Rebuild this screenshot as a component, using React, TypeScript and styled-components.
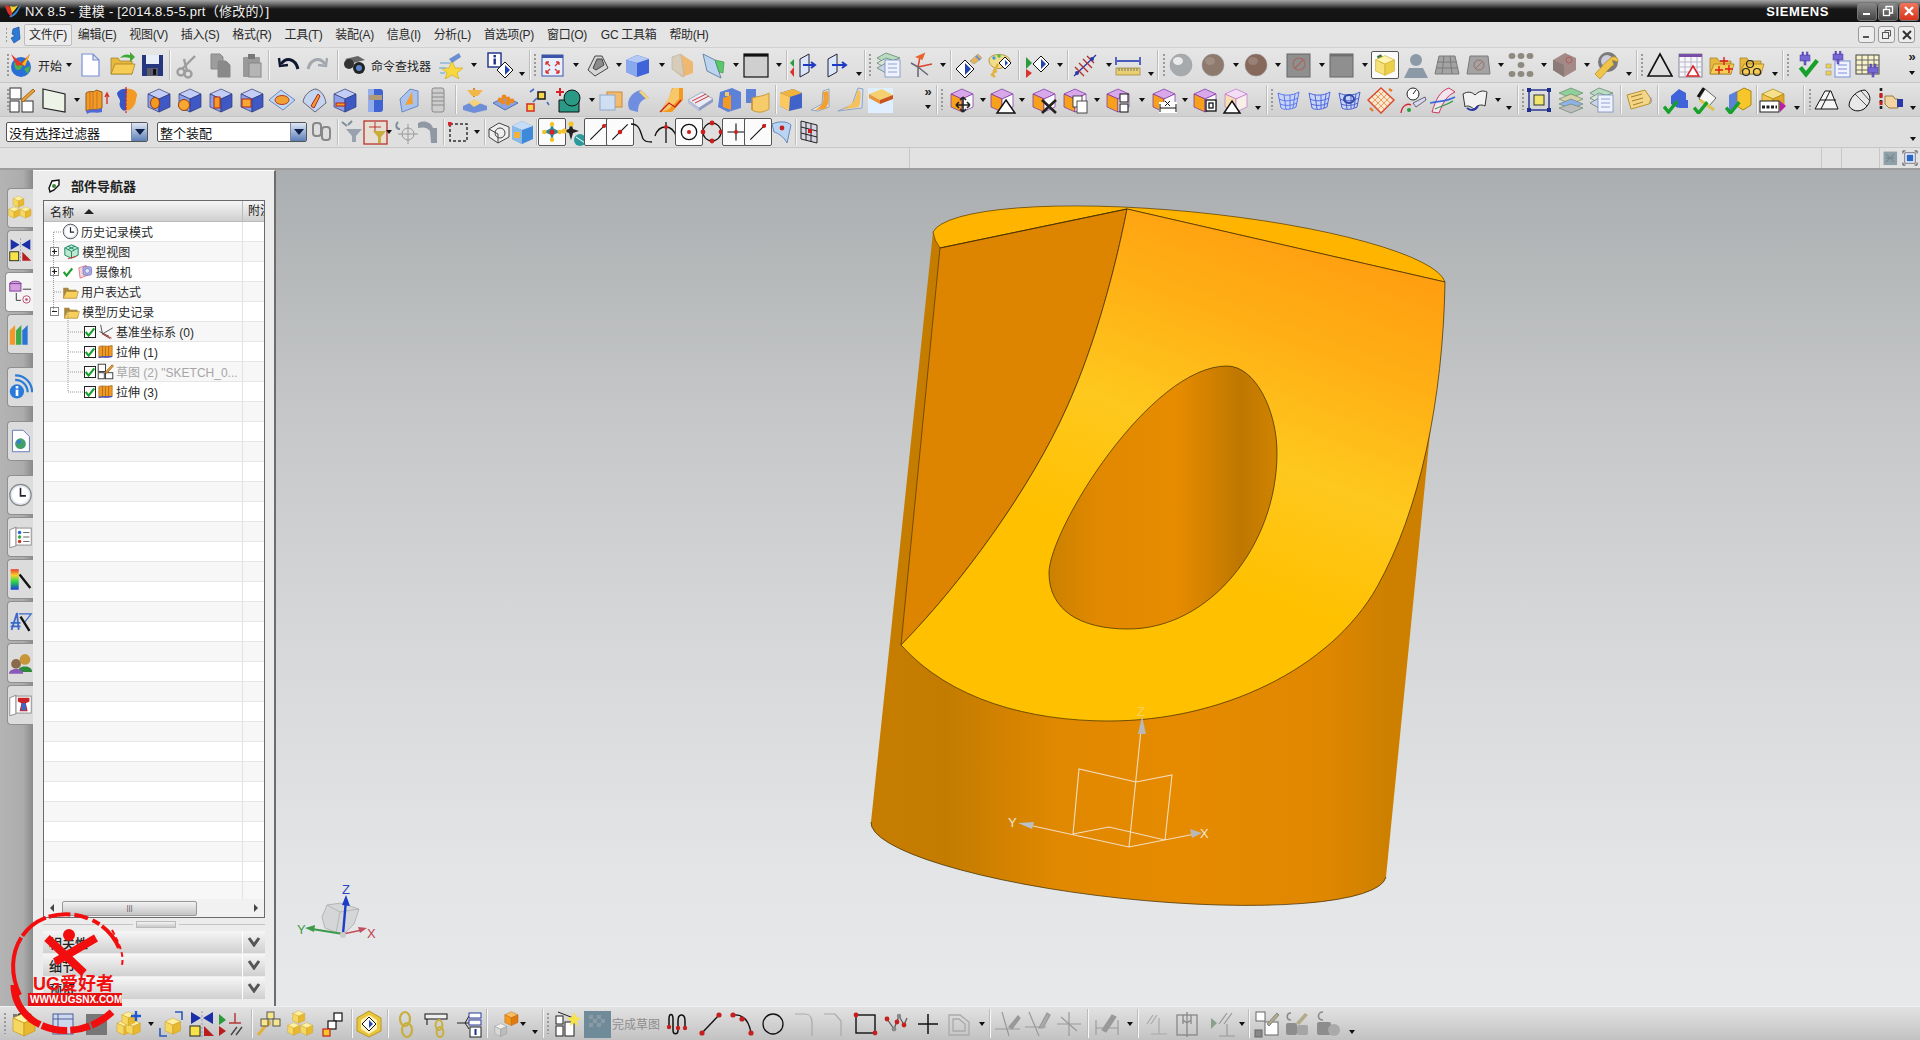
import React from 'react';
import styled, { createGlobalStyle } from 'styled-components';

const CJK = `"Liberation Sans", "Noto Sans CJK SC", sans-serif`;

const Global = createGlobalStyle`
  html, body { margin: 0; padding: 0; height: 100%; overflow: hidden; background: #e0e0e0; }
  #root { height: 100%; }
  * { box-sizing: border-box; }
`;

/* ---------- icon primitives ---------- */
const Cube = ({ t, l, r, s = '#2b3a78' }: { t: string; l: string; r: string; s?: string }) => (
  <g stroke={s} strokeWidth=".7" strokeLinejoin="round">
    <polygon points="14,3 25,8 14,13 3,8" fill={t} />
    <polygon points="3,8 14,13 14,26 3,21" fill={l} />
    <polygon points="14,13 25,8 25,21 14,26" fill={r} />
  </g>
);
const Blue = () => <Cube t="#c3cdf5" l="#8ea0ea" r="#3f58c4" />;
const Purple = ({ c }: { c?: React.ReactNode }) => (
  <g>
    <Cube t="#d9a8ea" l="#f7a01c" r="#fbfbfb" s="#7a2ea0" />
    {c}
  </g>
);
const Chk = ({ x = 0, y = 0, s = 1 }: { x?: number; y?: number; s?: number }) => (
  <polyline transform={`translate(${x} ${y}) scale(${s})`} points="1,6 5,11 13,1" fill="none" stroke="#18a02c" strokeWidth="3" />
);
const Surf = ({ c = '#5d78e8' }: { c?: string }) => (
  <g stroke={c} fill="#c9d4fb" strokeWidth="1">
    <path d="M4 7 C10 10 18 10 25 6 L22 21 C16 24 10 24 7 22 Z" />
    <path d="M10 9 L12 23 M16 9 L16 23 M21 8 L19 22 M5 13 C11 16 18 15 24 12 M6 18 C11 20 17 20 23 17" fill="none" />
  </g>
);
const Ball = ({ c, h }: { c: string; h: string }) => (
  <g>
    <circle cx="14" cy="14" r="11" fill={c} stroke="#999" strokeWidth=".5" />
    <ellipse cx="11" cy="10" rx="5" ry="4" fill={h} opacity=".75" />
  </g>
);
const Diamond = ({ x = 14, y = 14, r = 6, c = '#2546b0' }: { x?: number; y?: number; r?: number; c?: string }) => (
  <g>
    <polygon points={`${x},${y - r} ${x + r},${y} ${x},${y + r} ${x - r},${y}`} fill="#fff" stroke="#111" strokeWidth="1" />
    <polygon points={`${x},${y - r + 3} ${x + r - 3},${y} ${x},${y + r - 3}`} fill={c} />
  </g>
);
const Folder = ({ c = '#f7cc55' }: { c?: string }) => (
  <g>
    <path d="M3 7 L10 7 L12 10 L24 10 L24 23 L3 23 Z" fill="#e9b93e" stroke="#9a7a22" strokeWidth=".7" />
    <path d="M3 23 L7 13 L27 13 L24 23 Z" fill={c} stroke="#9a7a22" strokeWidth=".7" />
  </g>
);
const Plug = ({ x = 9, y = 2 }: { x?: number; y?: number }) => (
  <g transform={`translate(${x} ${y})`} fill="#7566d6" stroke="#44369a" strokeWidth=".5">
    <rect x="0" y="3" width="10" height="6" />
    <rect x="2" y="0" width="1.6" height="3" />
    <rect x="6.4" y="0" width="1.6" height="3" />
    <rect x="4" y="9" width="2" height="4" />
  </g>
);
const gray = '#9d9d9d';

const ICONS: Record<string, React.ReactNode> = {
  start: <g><circle cx="13" cy="16" r="10" fill="#2a6fd6" /><path d="M6 12 C10 8 14 10 15 14 C13 20 9 20 7 17 Z" fill="#4fb04a" /><path d="M16 18 L22 15 L20 23 Z" fill="#4fb04a" /><path d="M3 3 L13 12 L22 3 L17 15 L13 14 L9 15 Z" fill="#e8342c" /><path d="M22 3 L17 15 L14 13 Z" fill="#f2c21a" /></g>,
  new: <path d="M6 3 H17 L23 9 V25 H6 Z M17 3 V9 H23" fill="#fdfdff" stroke="#7a8fd6" strokeWidth="1.2" />,
  open: <g><Folder /><path d="M12 7 C15 3 19 3 22 4 L22 1 L27 6 L22 11 L22 7 C18 6 15 6 12 7 Z" fill="#3faa35" /></g>,
  save: <g><rect x="4" y="4" width="21" height="21" fill="#26367f" /><rect x="8" y="4" width="13" height="9" fill="#e8eef8" /><rect x="9" y="17" width="11" height="8" fill="#5c5c6c" /><rect x="15" y="18" width="3" height="6" fill="#111" /></g>,
  cut: <g stroke={gray} fill="none" strokeWidth="2.4"><circle cx="8" cy="21" r="3.5" /><circle cx="15" cy="23" r="3.5" /><path d="M9 18 L22 5 M14 20 L11 8" /></g>,
  copy: <g fill={gray} stroke="#888"><path d="M5 3 H14 L17 6 V18 H5 Z" /><path d="M12 10 H20 L24 14 V26 H12 Z" fill="#8a8a8a" /></g>,
  paste: <g><rect x="6" y="6" width="17" height="20" rx="1" fill="#999" /><rect x="11" y="3" width="7" height="5" fill="#777" /><rect x="12" y="12" width="12" height="14" fill="#b5b5b5" stroke="#888" /></g>,
  undo: <g fill="none" stroke="#101830" strokeWidth="3"><path d="M7 13 C12 6 21 7 24 18" /><path d="M5 7 L6 15 L14 14" strokeWidth="2.4" /></g>,
  redo: <g fill="none" stroke="#a2a7ad" strokeWidth="3"><path d="M21 13 C16 6 7 7 4 18" /><path d="M23 7 L22 15 L14 14" strokeWidth="2.4" /></g>,
  binoc: <g><path d="M4 8 L17 5 L24 9 L12 12 Z" fill="#666" /><circle cx="8" cy="13" r="5" fill="#333" /><circle cx="18" cy="17" r="6" fill="#222" /><circle cx="18" cy="17" r="3" fill="#5b84c9" /></g>,
  star: <g><polygon points="15,9 18,17 26,17 20,22 22,28 15,24 8,28 10,22 4,17 12,17" fill="#f7d83e" stroke="#d6aa1e" strokeWidth=".7" /><path d="M12 8 L22 2 L24 6 L15 12 Z" fill="#6d8fd0" /><path d="M3 12 H13 M2 17 H9 M3 22 H8" stroke="#8ab6d8" strokeWidth="1.3" /></g>,
  info: <g><rect x="2" y="2" width="13" height="14" fill="#fff" stroke="#1d2d8c" strokeWidth="1.4" /><rect x="7.5" y="4" width="2.4" height="2.4" fill="#1d2d8c" /><rect x="7.5" y="7.5" width="2.4" height="6" fill="#1d2d8c" /><Diamond x={19} y={19} r={8} /></g>,
  fit: <g><rect x="4" y="4" width="21" height="21" fill="#e9eefc" stroke="#3d53aa" strokeWidth="1" /><rect x="4" y="4" width="21" height="3" fill="#3d53aa" /><path d="M8 11 L12 15 M8 11 H11 M8 11 V14 M21 11 L17 15 M21 11 H18 M21 11 V14 M8 22 L12 18 M8 22 H11 M8 22 V19 M21 22 L17 18 M21 22 H18 M21 22 V19" stroke="#d23a2e" strokeWidth="1.3" fill="none" /></g>,
  pedal: <g stroke="#444" strokeWidth="1"><path d="M5 19 L12 5 H19 L25 17 L12 25 Z" fill="#d6d6d6" /><path d="M10 17 L14 8 H19 L21 14 L13 19 Z" fill="#8b8b8b" /></g>,
  cubeb: <g><polygon points="14,4 26,8 26,22 14,26 3,21 3,9" fill="#3f63d8" /><polygon points="14,4 26,8 14,12 3,9" fill="#b4c8f5" /><polygon points="3,9 14,12 14,26 3,21" fill="#8aa8ee" /></g>,
  ghost: <g opacity=".85"><polygon points="4,6 13,3 25,11 25,22 14,26 4,18" fill="#f2b25f" /><polygon points="4,6 13,3 16,26 4,18" fill="#d6c9b2" stroke="#aaa" strokeWidth=".6" /></g>,
  sect: <g><polygon points="4,3 16,9 22,27 8,20" fill="#bcd4ee" stroke="#6a87a8" /><polygon points="16,9 25,11 24,22 20,21" fill="#58c86a" stroke="#3c8a4a" strokeWidth=".6" /></g>,
  rect: <g><rect x="2" y="3" width="24" height="23" fill="#cfcfcf" stroke="#111" strokeWidth="1.2" /><rect x="2" y="3" width="24" height="2.6" fill="#111" /></g>,
  blank: <g><polygon points="11,8 20,3 20,21 11,26" fill="#dbe6fb" stroke="#223" /><polygon points="5,8 1,12 5,16" fill="#2a9a3a" /><polygon points="5,16 1,21 5,26" fill="#d8322a" /><path d="M14 14 H25 M22 11 L26 14 L22 17" stroke="#1c3ac4" strokeWidth="2" fill="none" /></g>,
  show: <g><polygon points="6,8 15,3 15,21 6,26" fill="#dbe6fb" stroke="#223" /><path d="M10 14 H23 M20 11 L24 14 L20 17" stroke="#1c3ac4" strokeWidth="2" fill="none" /></g>,
  layers: <g stroke="#5a7a6a" strokeWidth=".7"><polygon points="11,2 25,7 11,12 2,7" fill="#b7dcc0" /><polygon points="11,7 25,12 11,17 2,12" fill="#d8e5d8" /><polygon points="11,12 25,17 11,22 2,17" fill="#c8d4e8" /><rect x="10" y="9" width="15" height="17" fill="#eef2ff" stroke="#6c80b8" /><path d="M13 13 H22 M13 17 H22 M13 21 H22" stroke="#6c80b8" /></g>,
  csys: <g fill="none" strokeWidth="1.5"><path d="M10 16 L12 6" stroke="#d8452c" /><path d="M10 16 L24 13" stroke="#d8452c" /><path d="M10 16 L3 12 M10 16 L10 26 M10 16 L20 24" stroke="#667" /><path d="M9 6 L16 3 L14 8 Z" fill="#e8642c" stroke="#e8642c" /></g>,
  selb: <g><Diamond x={10} y={18} r={9} /><path d="M15 10 L23 3 L27 7 L19 13 Z" fill="#e8b458" stroke="#888" strokeWidth=".5" /><path d="M21 5 L25 9" stroke="#6d8fd0" strokeWidth="2" /></g>,
  paint: <g><path d="M4 9 C4 2 24 1 25 10 C25 15 18 13 17 17 C12 19 4 16 4 9 Z" fill="#f3dc8a" stroke="#b09a45" /><circle cx="9" cy="7" r="1.7" fill="#3a9ae0" /><circle cx="14" cy="5" r="1.7" fill="#4bc04b" /><Diamond x={20} y={12} r={6} /><path d="M13 13 L7 25 M8 19 L12 21 M6 23 L10 26" stroke="#e3b23a" strokeWidth="2.4" /></g>,
  select: <g><polygon points="2,6 8,12 2,18" fill="#2a9a3a" /><polygon points="2,18 8,22 2,27" fill="#d8322a" /><Diamond x={17} y={13} r={8} /></g>,
  rod: <g stroke="#b22a2a" strokeWidth="1.3" fill="none"><path d="M3 25 L25 4" stroke="#2838a8" /><path d="M4 16 L13 25 M8 12 L17 21 M12 8 L21 17 M16 5 L23 12" /><circle cx="6" cy="22" r="2" fill="#2838a8" stroke="none" /><circle cx="21" cy="8" r="2" fill="#2838a8" stroke="none" /></g>,
  ruler: <g><rect x="2" y="17" width="24" height="7" fill="#e8cf72" stroke="#9a8232" strokeWidth=".7" /><path d="M5 17 V20 M8 17 V20 M11 17 V20 M14 17 V20 M17 17 V20 M20 17 V20 M23 17 V20" stroke="#777" /><path d="M3 10 H25 M2 6 V14 M26 6 V14" stroke="#1a2fb0" strokeWidth="1.4" fill="none" /></g>,
  ball1: <Ball c="#a7aaad" h="#fff" />,
  ball2: <Ball c="#8e7a6c" h="#a59488" />,
  ball3: <Ball c="#87695c" h="#a08a7e" />,
  grect: <g><rect x="3" y="3" width="23" height="23" fill="#8f8f8f" stroke="#666" /><circle cx="15" cy="13" r="6" fill="none" stroke="#a56b62" strokeWidth="1.2" /><path d="M11 17 L19 9" stroke="#a56b62" strokeWidth="1.2" /></g>,
  grect2: <g><rect x="3" y="3" width="23" height="23" fill="#8f8f8f" stroke="#666" /><rect x="3" y="3" width="23" height="2.4" fill="#6f6f6f" /></g>,
  lamp: <g><polygon points="5,4 9,2 15,10 10,14" fill="#3a8a3a" stroke="#222" strokeWidth=".6" /><Cube t="#fff3b0" l="#f7e27a" r="#edd04a" s="#c8ac2c" /></g>,
  person: <g fill="#8b9aa6"><circle cx="14" cy="9" r="6" /><path d="M2 27 L7 17 H21 L26 27 Z" /></g>,
  gridg: <g stroke="#7a7a7a" fill="#a3a3a3"><polygon points="6,5 22,5 26,23 2,23" /><path d="M11 5 L9 23 M17 5 L19 23 M4 11 H24 M3 17 H25" fill="none" /></g>,
  trap: <g stroke="#7a7a7a" fill="#a3a3a3"><polygon points="6,5 24,5 26,23 3,23" /><circle cx="15" cy="14" r="5" fill="none" stroke="#9a7068" /><path d="M11 18 L19 10" stroke="#9a7068" /></g>,
  dots: <g fill="#8f8a80"><ellipse cx="5" cy="5" rx="3.4" ry="3" /><ellipse cx="14" cy="5" rx="3.4" ry="3" /><ellipse cx="23" cy="5" rx="3.4" ry="3" /><ellipse cx="14" cy="14" rx="3.4" ry="3" /><ellipse cx="5" cy="23" rx="3.4" ry="3" /><ellipse cx="14" cy="23" rx="3.4" ry="3" /><ellipse cx="23" cy="23" rx="3.4" ry="3" /></g>,
  gbox: <g><polygon points="15,2 26,7 26,19 14,26 3,19 3,9" fill="#a38a86" /><polygon points="3,9 14,14 14,26 3,19" fill="#8a7a78" /><circle cx="19" cy="9" r="3" fill="none" stroke="#b25b5b" /></g>,
  wrench: <g><circle cx="16" cy="11" r="10" fill="#7a7a7a" /><circle cx="15" cy="10" r="6" fill="#ccd" /><path d="M3 23 L14 11 L20 6 C25 5 26 8 26 11 L20 9 L22 14 C18 16 18 17 8 28 Z" fill="#efc44a" stroke="#b08a20" strokeWidth=".7" /></g>,
  tri: <polygon points="14,3 26,25 2,25" fill="none" stroke="#111" strokeWidth="1.6" />,
  cal: <g><rect x="3" y="3" width="23" height="23" fill="#f6f6fb" stroke="#8a8a9a" /><rect x="3" y="3" width="23" height="3" fill="#7a4ea8" /><path d="M3 11 H26 M3 16 H26 M3 21 H26 M9 6 V26 M15 6 V26 M21 6 V26" stroke="#b8b8c8" /><polygon points="17,15 23,25 11,25" fill="#fff" stroke="#d8222a" strokeWidth="1.5" /></g>,
  fstar: <g><Folder /><path d="M17 6 V14 M13 10 H21 M22 14 V22 M18 18 H26 M12 15 V23 M8 19 H16" stroke="#d81e1e" strokeWidth="1.4" /></g>,
  fcirc: <g><Folder /><g fill="none" stroke="#222" strokeWidth="1.2"><circle cx="13" cy="13" r="3.5" /><circle cx="9" cy="21" r="3.5" /><circle cx="20" cy="21" r="3.5" /></g></g>,
  vplug: <g><Plug x={7} y={1} /><Chk x={6} y={8} s={1.4} /></g>,
  lplug: <g><rect x="12" y="10" width="15" height="16" fill="#f0f3ff" stroke="#7a8fd6" /><path d="M15 14 H24 M15 18 H24 M15 22 H24" stroke="#7a8fd6" /><Plug x={10} y={0} /><rect x="3" y="13" width="5" height="4" fill="#f2d24a" stroke="#888" strokeWidth=".5" /><rect x="3" y="20" width="5" height="4" fill="#f2d24a" stroke="#888" strokeWidth=".5" /></g>,
  tplug: <g><rect x="2" y="4" width="23" height="19" fill="#f7f2c8" stroke="#444" /><path d="M2 9 H25 M2 14 H25 M2 19 H25 M8 4 V23 M14 4 V23 M20 4 V23" stroke="#666" /><Plug x={14} y={13} /></g>,

  sketch: <g fill="#fff" stroke="#333" strokeWidth="1"><rect x="2" y="2" width="11" height="11" /><rect x="2" y="15" width="9" height="11" /><rect x="14" y="15" width="11" height="11" /><path d="M13 14 L25 3 L27 5 L15 16 Z" fill="#e8a23a" stroke="#a86a1a" /></g>,
  docp: <g><polygon points="3,3 25,8 25,26 3,22" fill="#eef3e8" stroke="#222" strokeWidth="1.2" /></g>,
  extr: <g><path d="M4 7 C8 4 13 7 14 4 L20 6 V22 C15 25 9 22 4 25 Z" fill="#f09a28" stroke="#9a5a10" /><path d="M8 6 V24 M11 6 V24 M15 6 V24" stroke="#c8741a" /><path d="M4 25 C9 22 15 25 20 22 L20 26 C14 28 9 25 5 28 Z" fill="#5068d8" /><path d="M25 18 V8 M23 11 L25 7 L27 11" stroke="#d8322a" strokeWidth="1.4" fill="none" /></g>,
  rev: <g><path d="M4 7 C6 3 12 2 14 3 L13 24 C10 27 5 20 7 16 C8 14 4 10 4 7 Z" fill="#3557c8" /><path d="M14 3 C20 2 25 7 24 10 C22 14 24 16 20 21 C18 24 15 25 13 24 Z" fill="#f39a25" /><path d="M13 1 V27" stroke="#d81e1e" strokeWidth="1.2" strokeDasharray="3 1" /></g>,
  h1: <g><Blue /><ellipse cx="10" cy="17" rx="4.5" ry="5.5" fill="#f39a25" stroke="#9a3a10" /></g>,
  h2: <g><Blue /><circle cx="8" cy="19" r="5.5" fill="#f6a830" stroke="#9a3a10" /></g>,
  h3: <g><Blue /><rect x="7" y="11" width="6" height="11" fill="#f39a25" stroke="#b0201a" /></g>,
  h4: <g><Blue /><rect x="4" y="13" width="9" height="8" fill="#f6a830" stroke="#b0201a" /></g>,
  h5: <g><polygon points="13,4 27,14 15,24 1,14" fill="#bfd6f7" stroke="#6a88c0" /><ellipse cx="14" cy="14" rx="7" ry="4.5" fill="#f3a032" stroke="#b0401a" /></g>,
  h6: <g><path d="M3 16 C4 8 12 3 16 3 C22 5 25 11 26 17 L15 26 Z" fill="#c5d4ef" stroke="#667" /><path d="M11 20 L18 8 L20 10 L14 22 Z" fill="#f3a032" stroke="#b0201a" /></g>,
  h7: <g><Blue /><rect x="5" y="17" width="9" height="3" fill="#f39a25" stroke="#b0201a" /></g>,
  cyl: <g><rect x="6" y="3" width="15" height="23" rx="3" fill="#3f63d0" /><rect x="6" y="3" width="6" height="23" fill="#93acec" /><rect x="7" y="9" width="13" height="5" fill="#b09a78" /></g>,
  shell: <g><polygon points="7,13 17,3 25,5 25,20 9,26" fill="#a9c2ee" stroke="#6a88c0" /><polygon points="12,19 19,6 20,18" fill="#f3a032" /></g>,
  spring: <g stroke="#8a8a8a" fill="#cdcdcd"><rect x="8" y="2" width="12" height="24" rx="2" /><path d="M8 7 H20 M8 11 H20 M8 15 H20 M8 19 H20" fill="none" /></g>,
  padt: <g><path d="M13 2 V11" stroke="#d8822a" strokeWidth="2" /><polygon points="6,4 22,4 17,10 11,10" fill="#f2b74a" /><polygon points="2,20 13,15 26,20 26,24 13,27 2,24" fill="#6f8ed8" /><polygon points="8,17 13,13 20,17 13,21" fill="#f6d276" /></g>,
  dimp: <g><polygon points="2,17 14,11 27,17 14,24" fill="#8aa4e0" stroke="#5570b8" /><g fill="#ec8a22"><circle cx="9" cy="14" r="2.4" /><circle cx="13" cy="11" r="2.4" /><circle cx="17" cy="13" r="2.4" /><circle cx="12" cy="16" r="2.4" /><circle cx="17" cy="17" r="2.4" /><circle cx="21" cy="15" r="2.4" /></g></g>,
  lnk: <g fill="#fff" strokeWidth="1.6"><rect x="3" y="18" width="7" height="7" stroke="#d8322a" fill="#f7d84a" /><rect x="14" y="6" width="7" height="7" stroke="#222" fill="#f7d84a" /><path d="M9 16 L13 12 M6 6 L10 3" stroke="#4a6ac0" /><path d="M23 16 L25 19" stroke="#4a6ac0" /></g>,
  teal: <g><polygon points="4,14 24,14 24,26 4,26" fill="#2a9a86" stroke="#111" /><circle cx="17" cy="12" r="8" fill="#2a9a86" stroke="#111" /><path d="M5 2 V10 M1 6 H9" stroke="#d8222a" strokeWidth="2" /></g>,
  tcube: <g opacity=".9"><rect x="10" y="6" width="15" height="15" fill="#f6b860" stroke="#c8822a" /><rect x="3" y="9" width="15" height="15" fill="#cfe0f6" stroke="#8aa4c8" /></g>,
  dia2: <g><path d="M7 24 C2 16 8 6 18 4 L26 12 C18 13 15 18 15 26 Z" fill="#6f8ee0" /><path d="M18 4 L26 12 L24 14 L16 6 Z" fill="#f6d276" /></g>,
  chamf: <g><path d="M3 26 L12 12 L15 2 H26 V14 L15 26 Z" fill="#f39a25" /><path d="M16 2 H22 V13 L12 23 L5 26 Z" fill="#f7c86a" /><path d="M3 26 L12 17 L18 21 L24 14" stroke="#c81e1e" strokeWidth="1.2" fill="none" /></g>,
  plate: <g><polygon points="2,14 16,6 27,13 13,22" fill="#e8ecf6" stroke="#a5acc0" /><polygon points="2,14 13,22 13,25 2,17" fill="#b8c0d8" /><polygon points="13,22 27,13 27,16 13,25" fill="#8e9bc0" /><path d="M6 15 L20 8 M9 17 L23 10" stroke="#d2302a" /></g>,
  block: <g><polygon points="5,6 17,2 26,6 26,22 13,26 3,21" fill="#5d80d8" /><polygon points="8,12 16,9 16,24 8,21" fill="#f39a25" /><rect x="10" y="6" width="4" height="4" fill="#f7c86a" /></g>,
  curtain: <g><rect x="3" y="3" width="10" height="14" fill="#5d80d8" /><path d="M9 12 C16 10 22 10 26 7 V23 C20 27 14 27 9 24 Z" fill="#f6cb6a" stroke="#c89a3a" /><path d="M9 12 V24" stroke="#c8822a" /></g>,
  cubeo: <g><polygon points="3,7 16,3 25,7 25,22 12,25 3,20" fill="#3f63c8" /><polygon points="3,7 16,3 25,7 13,11" fill="#f3b23a" /><polygon points="3,7 13,11 12,25 3,20" fill="#fcc860" /></g>,
  curv1: <g><polygon points="15,5 21,3 21,21 10,25 3,24 14,18" fill="#f7e8d6" stroke="#8aa4c8" /><path d="M15 6 C15 12 18 18 7 24 L17 23 C22 18 21 10 20 5 Z" fill="#f3a032" /></g>,
  curv2: <g><polygon points="22,2 27,3 26,22 2,25 16,19" fill="#d8e0f0" stroke="#8aa4c8" /><path d="M21 5 C21 14 14 21 5 24 L23 21 C25 14 25 9 24 4 Z" fill="#f6c05a" /></g>,
  lcube: <g><rect x="2" y="2" width="25" height="25" fill="#dfefff" /><polygon points="3,8 16,3 27,9 14,14" fill="#f6d070" /><polygon points="3,8 14,14 14,18 3,12" fill="#e8963a" /><polygon points="14,14 27,9 27,13 14,18" fill="#c8541e" /></g>,

  pmove: <Purple c={<path d="M15 11 V26 M8 19 H22 M15 11 L12 14 M15 11 L18 14 M15 26 L12 23 M15 26 L18 23 M8 19 L11 16 M8 19 L11 22 M22 19 L19 16 M22 19 L19 22" stroke="#222" strokeWidth="1.6" fill="none" />} />,
  ptri: <Purple c={<polygon points="18,14 27,27 9,27" fill="#fff" stroke="#111" strokeWidth="1.5" />} />,
  px: <Purple c={<path d="M12 14 L26 27 M26 14 L12 27" stroke="#222" strokeWidth="2.6" />} />,
  pcopy: <Purple c={<g fill="#fff" stroke="#222" strokeWidth=".8"><rect x="12" y="10" width="9" height="11" /><rect x="16" y="15" width="10" height="12" /></g>} />,
  psplit: <Purple c={<g fill="#fff" stroke="#222" strokeWidth="1.1"><rect x="16" y="8" width="8" height="8" /><rect x="16" y="18" width="8" height="8" /></g>} />,
  pdim: <Purple c={<g fill="#fff" stroke="#111"><rect x="9" y="16" width="18" height="11" stroke="none" /><path d="M10 22 H26 M10 18 V26 M26 18 V26 M15 20 L20 15 M15 15 L20 20" /></g>} />,
  poff: <Purple c={<g fill="none" stroke="#111" strokeWidth="1.3"><rect x="15" y="14" width="10" height="11" fill="#fff" /><rect x="18" y="17" width="4" height="5" fill="#fff" /></g>} />,
  plight: <g><Cube t="#f3def6" l="#f6e0b0" r="#f6f0e6" s="#c070d0" /><polygon points="10,15 18,27 2,27" fill="#fff" stroke="#111" strokeWidth="1.5" /></g>,
  surf1: <Surf />,
  surf2: <Surf c="#4f68d8" />,
  surf3: <g><Surf c="#4a62c8" /><ellipse cx="14" cy="13" rx="5" ry="4" fill="none" stroke="#2f47a8" strokeWidth="2" /></g>,
  redgrid: <g><polygon points="14,2 27,14 14,27 1,14" fill="#fbe6cf" stroke="#d8482a" strokeWidth="1.4" /><path d="M8 8 L20 20 M5 11 L17 23 M11 5 L23 17 M20 8 L8 20 M23 11 L11 23 M17 5 L5 17" stroke="#e8a060" /><path d="M3 22 L6 25 M25 5 L22 3" stroke="#e87a1e" strokeWidth="2.2" /></g>,
  gauge: <g><circle cx="14" cy="8" r="6" fill="#fff" stroke="#222" /><path d="M14 8 L17 4" stroke="#222" /><path d="M14 17 L26 11 L27 14 L17 21 Z" fill="#d8d8f0" stroke="#334" strokeWidth=".7" /><path d="M2 27 C3 19 9 17 12 19" stroke="#d8222a" strokeWidth="1.4" fill="none" /><circle cx="10" cy="24" r="2" fill="#2a9a3a" /></g>,
  sflow: <g fill="none"><path d="M3 26 C7 13 11 5 20 2 L26 6 C17 10 14 17 10 27 Z" fill="#f4e4f0" stroke="#c83a5a" /><path d="M1 17 C9 15 17 16 26 11" stroke="#3a6ad8" strokeWidth="1.6" /><path d="M6 23 C12 20 18 19 24 15" stroke="#2a9a3a" strokeWidth="1.2" /></g>,
  book: <g><path d="M2 8 C7 5 11 6 14 9 C18 5 22 4 26 6 L24 20 C20 18 16 19 13 23 C9 20 6 19 4 21 Z" fill="#f2f2f2" stroke="#333" /><path d="M6 22 C10 25 14 25 17 20" stroke="#2838a8" strokeWidth="2" fill="none" /></g>,
  frame: <g><rect x="4" y="4" width="20" height="20" fill="none" stroke="#1f2f8c" strokeWidth="1.4" /><rect x="9" y="9" width="10" height="10" fill="#f2e66a" stroke="#333" /><g fill="#1f2f8c"><rect x="2" y="2" width="4" height="4" /><rect x="22" y="2" width="4" height="4" /><rect x="2" y="22" width="4" height="4" /><rect x="22" y="22" width="4" height="4" /></g></g>,
  stack: <g stroke="#6a8a6a" strokeWidth=".7"><polygon points="14,2 26,7 14,12 2,7" fill="#8fcf9c" /><polygon points="14,8 26,13 14,18 2,13" fill="#d8d2a8" /><polygon points="14,13 26,18 14,23 2,18" fill="#8fb0e8" /><polygon points="14,18 26,22 14,27 2,22" fill="#bdbdbd" /></g>,
  tag: <g><polygon points="2,9 20,4 26,13 24,18 6,23" fill="#f3d68a" stroke="#b8932e" /><path d="M6 11 L17 8 M7 15 L18 12 M8 19 L18 16" stroke="#a67e20" /><path d="M24 10 C27 12 27 16 25 18" stroke="#999" fill="none" /></g>,
  vblue: <g><polygon points="9,10 17,3 24,7 24,14 16,22 9,18" fill="#3f63d8" /><polygon points="17,14 26,14 26,22 17,22" fill="#3f63d8" /><Chk x={1} y={14} s={1.1} /></g>,
  vham: <g><path d="M7 13 L13 3 L24 12 L17 20 Z" fill="#f6f6f6" stroke="#666" /><path d="M8 14 L22 24" stroke="#dcc24a" strokeWidth="3" /><path d="M12 2 L6 11" stroke="#111" strokeWidth="3" /><Chk x={1} y={15} s={1.1} /></g>,
  vcube: <g><polygon points="13,6 20,2 27,5 27,19 19,24 13,20" fill="#f7c62a" stroke="#a8860f" /><polygon points="5,9 13,5 13,22 5,25" fill="#5d80d8" /><Chk x={1} y={15} s={1.1} /></g>,
  abc: <g><Cube t="#f7e08a" l="#f3c34a" r="#e0a82a" s="#a8860f" /><rect x="1" y="15" width="19" height="11" fill="#fff" stroke="#222" /><path d="M3 21 H18" stroke="#222" strokeWidth="3" strokeDasharray="3 1.5" /><polygon points="21,15 27,20 21,26" fill="#b81ea8" /></g>,
  hat1: <g><polygon points="2,23 12,5 18,5 25,23 8,23" fill="#f6f6f6" stroke="#111" /><path d="M7 14 H23" stroke="#111" /><path d="M17 5 L8 23" stroke="#111" /></g>,
  hat2: <g><path d="M4 20 C4 12 12 4 20 4 C25 8 27 14 22 20 C18 26 8 27 4 20 Z" fill="#e8e8e8" stroke="#111" /><path d="M10 8 L22 20 M16 5 L24 14" stroke="#555" /></g>,
  hand: <g><path d="M5 2 V26" stroke="#222" strokeWidth="2.6" strokeDasharray="3 3" /><rect x="3.5" y="7" width="3" height="5" fill="#c81e1e" /><rect x="3.5" y="15" width="3" height="4" fill="#c81e1e" /><path d="M9 10 H17 L19 13 H22 V22 H13 L9 18 Z" fill="#f3d4a0" stroke="#9a7a40" /><rect x="21" y="13" width="6" height="8" fill="#2838a8" /></g>,

  lnkg: <g fill="#a9a9a9"><rect x="5" y="5" width="8" height="13" rx="3" stroke="#888" fill="none" strokeWidth="2" /><rect x="14" y="9" width="8" height="13" rx="3" stroke="#888" fill="none" strokeWidth="2" /></g>,
  filt1: <g><path d="M7 8 L2 4 M8 7 L12 3" stroke="#7c8f9a" strokeWidth="2" /><polygon points="6,11 22,11 16,18 16,24 12,24 12,18" fill="#9aa2ae" /></g>,
  filt2: <g><rect x="3" y="3" width="23" height="23" fill="#e8dfd4" stroke="#b8342a" strokeWidth="1.3" /><path d="M8 9 H20 M14 4 V15" stroke="#b8342a" /><polygon points="12,13 25,13 20,19 20,25 17,25 17,19" fill="#c8ae3c" /></g>,
  filt3: <g stroke="#999" fill="none"><circle cx="16" cy="16" r="6" /><path d="M16 6 V26 M6 16 H26" /><path d="M6 4 C3 7 4 11 8 11" stroke="#7c8f9a" strokeWidth="2" /></g>,
  filt4: <g><path d="M3 5 C9 2 16 4 18 10 L22 10 L22 25 L16 25 L15 13 C12 9 8 9 3 10 Z" fill="#9098a4" /></g>,
  dash: <g><rect x="6" y="6" width="17" height="17" fill="none" stroke="#333" strokeWidth="1.5" strokeDasharray="3 2" /><rect x="4" y="4" width="3.6" height="3.6" fill="#d8222a" /></g>,
  wire: <g fill="none" stroke="#444"><path d="M4 11 L14 5 L24 9 L24 19 L13 25 L4 19 Z" fill="#efefef" /><circle cx="15" cy="15" r="5" /><path d="M4 11 L13 16 L13 25" /></g>,
  shade: <g><polygon points="14,3 25,8 25,21 14,26 4,21 4,8" fill="#3f8ad8" /><polygon points="14,3 25,8 14,12 4,8" fill="#c6dcf4" /><polygon points="4,8 14,12 14,26 4,21" fill="#89bbea" /><rect x="6" y="14" width="6" height="6" fill="#f3b23a" /></g>,
  snapa: <g><path d="M14 3 L16 10 L24 14 L16 17 L14 25 L12 17 L4 14 L12 10 Z" fill="#2a8a9a" /><g fill="#f3c32a"><circle cx="14" cy="5" r="2.6" /><circle cx="5" cy="14" r="2.6" /><circle cx="23" cy="14" r="2.6" /><circle cx="14" cy="23" r="2.6" /></g><circle cx="14" cy="14" r="3" fill="#d8222a" /></g>,
  snapb: <g><path d="M10 4 L12 11 L18 13 L12 15 L10 22 L8 15 L2 13 L8 11 Z" fill="#222" /><circle cx="10" cy="6" r="2.6" fill="#f3c32a" /><circle cx="3" cy="13" r="2.6" fill="#f3c32a" /><circle cx="19" cy="22" r="6" fill="#2a9a9a" /><path d="M15 19 L24 25" stroke="#fff" /></g>,
  endp: <g><path d="M5 23 L23 5" stroke="#111" strokeWidth="1.3" /><circle cx="21" cy="7" r="2.4" fill="#c81e1e" /></g>,
  midp: <g><path d="M5 23 L23 5" stroke="#111" strokeWidth="1.3" /><circle cx="14" cy="14" r="2.6" fill="#c81e1e" /></g>,
  ctrl: <path d="M3 6 C11 6 12 12 14 18 C15 24 20 24 24 24" fill="none" stroke="#111" strokeWidth="1.3" />,
  tang: <g fill="none" stroke="#111" strokeWidth="1.3"><path d="M3 18 C7 6 20 6 24 18" /><path d="M14 4 V25" /><circle cx="14" cy="9" r="2" fill="#c81e1e" stroke="none" /></g>,
  centerp: <g><circle cx="14" cy="14" r="9" fill="none" stroke="#111" strokeWidth="1.5" /><circle cx="14" cy="14" r="2.4" fill="#c81e1e" /></g>,
  quad: <g><circle cx="14" cy="14" r="9" fill="none" stroke="#111" strokeWidth="1.3" /><g fill="#c81e1e"><circle cx="14" cy="5" r="2.4" /><circle cx="14" cy="23" r="2.4" /><circle cx="5" cy="14" r="2.4" /><circle cx="23" cy="14" r="2.4" /></g></g>,
  cross: <g><path d="M14 4 V24 M4 14 H24" stroke="#111" strokeWidth="1.3" /><circle cx="14" cy="14" r="2.2" fill="#c81e1e" /></g>,
  facep: <g><path d="M5 6 C12 3 20 3 24 7 L20 25 C17 19 11 15 7 14 Z" fill="#b8d4f2" stroke="#6a88b8" /><circle cx="15" cy="10" r="2.4" fill="#c81e1e" /></g>,
  gridm: <g stroke="#222" fill="#d8d4e4"><polygon points="6,3 22,7 22,25 6,21" /><path d="M6 9 L22 13 M6 15 L22 19 M11 4 V22 M16 6 V24" fill="none" /><rect x="13" y="11" width="4" height="4" fill="#c81e1e" stroke="none" /></g>,
  vq: <g><rect x="4" y="4" width="21" height="21" fill="#8fa0a8" /><path d="M8 8 L20 20 M20 8 L8 20 M8 14 H20" stroke="#7a8a92" strokeWidth="2" /></g>,
  vfit: <g><path d="M3 7 V3 H7 M21 3 H25 V7 M25 21 V25 H21 M7 25 H3 V21" fill="none" stroke="#333" strokeWidth="1.3" /><rect x="6" y="6" width="16" height="16" fill="#f2f6fb" stroke="#335" /><rect x="9" y="9" width="10" height="10" fill="#2a68c8" /></g>,

  sm1: <g><rect x="3" y="4" width="4" height="4" fill="#777" /><circle cx="11" cy="7" r="4" fill="#333" /><circle cx="18" cy="7" r="4" fill="#333" /><Cube t="#fff2a0" l="#f6d760" r="#e8b82e" s="#c79a20" /></g>,
  sm2: <g><rect x="4" y="4" width="20" height="20" fill="#cdd8ee" stroke="#4a5e9a" /><path d="M4 9 H24 M9 4 V24" stroke="#4a5e9a" /></g>,
  sm3: <g><rect x="4" y="4" width="21" height="21" fill="#777" /></g>,
  sm4: <g><g transform="translate(0 8) scale(.65)"><Cube t="#fff0a0" l="#f6d760" r="#e8b82e" s="#c79a20" /></g><g transform="translate(9 8) scale(.65)"><Cube t="#fff0a0" l="#f6d760" r="#e8b82e" s="#c79a20" /></g><g transform="translate(5 0) scale(.6)"><Cube t="#fff0a0" l="#f6d760" r="#e8b82e" s="#c79a20" /></g><path d="M21 1 V11 M16 6 H26" stroke="#1e5ad8" strokeWidth="2.4" /></g>,
  sm5: <g><g transform="translate(6 6) scale(.7)"><Cube t="#fff0a0" l="#f6d760" r="#e8b82e" s="#c79a20" /></g><path d="M3 18 V26 H10 M25 10 V2 H18" fill="none" stroke="#2a5ab8" strokeWidth="1.6" /></g>,
  mirror: <g><polygon points="3,2 13,8 3,14" fill="#1a2fa8" /><polygon points="25,2 15,8 25,14" fill="#1a2fa8" /><path d="M14 1 V27" stroke="#8a9ab8" strokeDasharray="2 2" /><rect x="2" y="16" width="10" height="10" fill="#f7e24a" stroke="#222" /><polygon points="16,16 26,26 16,26" fill="#b81e1e" /></g>,
  perp: <g><polygon points="2,4 9,10 2,15" fill="#2a9a3a" /><polygon points="2,16 9,21 2,26" fill="#b81e1e" /><path d="M18 3 V13 M12 13 H24" stroke="#b83a3a" strokeWidth="1.5" /><path d="M14 25 L20 17 M19 25 L25 17" stroke="#444" strokeWidth="1.4" /></g>,
  keyc: <g><path d="M3 25 L12 14" stroke="#e0b23a" strokeWidth="3" /><circle cx="13" cy="13" r="3" fill="#e0b23a" /><rect x="12" y="2" width="7" height="7" fill="#f7e68a" stroke="#555" /><rect x="6" y="9" width="7" height="7" fill="#f7e68a" stroke="#555" /><rect x="18" y="9" width="7" height="7" fill="#f7e68a" stroke="#555" /></g>,
  ycubes: <g><g transform="translate(4 -1) scale(.55)"><Cube t="#fff0a0" l="#f6d760" r="#e8b82e" s="#c79a20" /></g><g transform="translate(-1 11) scale(.55)"><Cube t="#fff0a0" l="#f6d760" r="#e8b82e" s="#c79a20" /></g><g transform="translate(12 11) scale(.55)"><Cube t="#fff0a0" l="#f6d760" r="#e8b82e" s="#c79a20" /></g></g>,
  squares: <g stroke="#111" strokeWidth="1.2"><rect x="15" y="3" width="8" height="8" fill="#fff" /><rect x="9" y="11" width="8" height="8" fill="#fff" /><rect x="4" y="19" width="7" height="7" fill="#f7c62a" stroke="#c81e1e" /></g>,
  hexd: <g><polygon points="14,1 26,8 26,21 14,27 2,21 2,8" fill="#e9c63a" stroke="#b8962a" /><polygon points="14,5 22,10 22,19 14,24 6,19 6,10" fill="#fff3c0" /><Diamond r={7} /></g>,
  chain: <g fill="none" stroke="#c8ae3c" strokeWidth="2.2"><ellipse cx="13" cy="9" rx="5" ry="7" /><ellipse cx="15" cy="20" rx="5" ry="7" /></g>,
  cchain: <g fill="none"><rect x="2" y="4" width="22" height="5" fill="#eee" stroke="#111" /><path d="M4 9 V15" stroke="#111" /><ellipse cx="16" cy="15" rx="3.4" ry="5" stroke="#c8ae3c" strokeWidth="2" /><ellipse cx="17" cy="22" rx="3.4" ry="5" stroke="#c8ae3c" strokeWidth="2" /></g>,
  treei: <g><path d="M2 13 L10 13 L14 6 H26 M10 13 L14 13 H24 M10 13 L14 19" stroke="#222" fill="none" /><rect x="14" y="3" width="12" height="5" fill="#fff" stroke="#2a3a9a" /><rect x="14" y="10" width="12" height="5" fill="#fff" stroke="#2a3a9a" /><rect x="15" y="17" width="11" height="10" fill="#fff" stroke="#222" /><rect x="19.5" y="19" width="2" height="6" fill="#1d2d8c" /></g>,
  twoc: <g><g transform="translate(11 0) scale(.6)"><Cube t="#f7c062" l="#f29a1e" r="#e07a10" s="#b85a10" /></g><g transform="translate(1 12) scale(.55)"><Cube t="#f0f0f0" l="#d8d8d8" r="#bdbdbd" s="#888" /></g></g>,
  frameStar: <g><rect x="3" y="6" width="7" height="8" fill="#fff" stroke="#222" /><rect x="3" y="16" width="7" height="10" fill="#fff" stroke="#222" /><rect x="12" y="12" width="9" height="14" fill="#fff" stroke="#222" /><path d="M5 2 L23 9" stroke="#222" /><polygon points="21,2 23,7 28,8 24,11 25,16 21,13 17,16 18,11 14,8 19,7" fill="#f7e24a" /></g>,
  flag: <g><rect x="1" y="1" width="27" height="27" fill="#6f8a98" /><g fill="#8a9aa6"><rect x="6" y="5" width="4" height="4" /><rect x="14" y="5" width="4" height="4" /><rect x="10" y="9" width="4" height="4" /><rect x="18" y="9" width="4" height="4" /><rect x="6" y="13" width="4" height="4" /><rect x="14" y="13" width="4" height="4" /></g></g>,
  spline: <g fill="none"><path d="M4 16 V9 C4 3 8 3 8 9 V20 C8 25 13 25 13 20 V11 C13 3 20 3 20 11 V20" stroke="#111" strokeWidth="1.5" /><g fill="#c81e1e"><circle cx="4" cy="17" r="2.2" /><circle cx="13" cy="18" r="2.2" /><circle cx="20" cy="18" r="2.2" /></g></g>,
  line: <g><path d="M4 24 L23 4" stroke="#111" strokeWidth="1.4" /><circle cx="5" cy="23" r="2.6" fill="#c81e1e" /><circle cx="22" cy="5" r="2.6" fill="#c81e1e" /></g>,
  arc: <g><path d="M5 5 C15 4 21 11 23 23" fill="none" stroke="#111" strokeWidth="1.4" /><circle cx="5" cy="5" r="2.6" fill="#c81e1e" /><circle cx="14" cy="9" r="2.6" fill="#c81e1e" /><circle cx="23" cy="23" r="2.6" fill="#c81e1e" /></g>,
  circle: <circle cx="14" cy="14" r="10" fill="none" stroke="#111" strokeWidth="1.3" />,
  fil1: <path d="M4 4 H14 C19 4 21 8 21 12 V26" fill="none" stroke="#aaa" strokeWidth="1.2" />,
  fil2: <path d="M4 4 H15 L21 11 V26" fill="none" stroke="#aaa" strokeWidth="1.2" />,
  rectc: <g><rect x="5" y="5" width="19" height="18" fill="none" stroke="#111" strokeWidth="1.4" /><circle cx="5" cy="5" r="2.4" fill="#c81e1e" /><circle cx="24" cy="23" r="2.4" fill="#c81e1e" /></g>,
  poly: <g><path d="M4 9 L11 19 L16 6 L21 15 L24 8" fill="none" stroke="#555" strokeWidth="1.2" /><circle cx="11" cy="19" r="2.4" fill="#888" /><circle cx="4" cy="9" r="2.4" fill="#c81e1e" /><circle cx="14" cy="12" r="2.4" fill="#c81e1e" /><circle cx="16" cy="6" r="2.2" fill="#888" /><circle cx="21" cy="15" r="2.4" fill="#c81e1e" /></g>,
  plus: <path d="M14 4 V24 M4 14 H24" stroke="#111" strokeWidth="1.5" />,
  offs: <g fill="none" stroke="#aaa" strokeWidth="1.3"><path d="M4 5 H15 L24 12 V25 H4 Z" /><path d="M8 9 H14 L20 14 V21 H8 Z" /></g>,
  tr1: <g fill="none" stroke="#999" strokeWidth="1.2"><path d="M8 2 L15 26 M1 19 H26" /><path d="M15 17 L24 6 L26 8 L18 19 Z" fill="#999" /></g>,
  tr2: <g fill="none" stroke="#999" strokeWidth="1.2"><path d="M5 2 L15 26 M1 17 H22" /><path d="M15 18 L23 3 L26 5 L19 18 Z" fill="#aaa" /></g>,
  tr3: <g fill="none" stroke="#999" strokeWidth="1.2"><path d="M14 2 V26 M2 14 H26" /><path d="M6 7 L22 21" /></g>,
  dim1: <g fill="none" stroke="#999" strokeWidth="1.1"><path d="M3 10 V25 M25 10 V25 M3 18 H25" /><path d="M9 20 L19 5 L23 7 L13 22 Z" fill="#999" /></g>,
  par: <g fill="none" stroke="#aaa" strokeWidth="1.2"><path d="M5 14 L11 5 M9 14 L15 5 M17 8 V24 M9 24 H25" /></g>,
  gear: <g fill="none" stroke="#888" strokeWidth="1.3"><rect x="4" y="5" width="20" height="20" /><path d="M14 2 V27 M10 5 V14 M18 5 V14 M10 10 L14 13 L18 10" /></g>,
  par2: <g fill="none" stroke="#999" strokeWidth="1.2"><polygon points="2,8 8,13 2,19" fill="#8aa08a" stroke="none" /><path d="M10 14 L18 3 M15 14 L23 3 M18 14 V26 M10 26 H26" /></g>,
  exch: <g stroke="#666" fill="#fff"><rect x="3" y="2" width="9" height="9" /><rect x="12" y="12" width="13" height="13" /><rect x="2" y="20" width="7" height="7" fill="#888" /><path d="M14 14 L24 3 L26 5 L16 16 Z" fill="#b2aa88" stroke="#888" /></g>,
  gp1: <g><path d="M8 3 C3 3 3 10 8 10" fill="none" stroke="#8a8a8a" strokeWidth="1.6" /><rect x="3" y="13" width="11" height="12" rx="2" fill="#8d8d8d" /><rect x="14" y="15" width="11" height="10" rx="2" fill="#a5a5a5" /><path d="M13 13 L22 3 L25 5 L16 15 Z" fill="#b2aa88" /></g>,
  gp2: <g><path d="M9 2 C3 2 3 10 9 10" fill="none" stroke="#8a8a8a" strokeWidth="1.6" /><rect x="3" y="12" width="14" height="13" rx="2" fill="#8d8d8d" /><circle cx="20" cy="20" r="6" fill="#aaa" /></g>,
};

/* ---------- toolbar data: [kind, centre x, label, width] ---------- */
type Item = [string, number, string?, number?];
const ROW1: Item[] = [['g',8],['start',22],['t',50,'开始',24],['a',68],['new',90],['open',122],['save',152],['s',170],['cut',187],['copy',220],['paste',251],['s',269],['undo',288],['redo',318],['s',338],['binoc',355],['t',401,'命令查找器',60],['star',451],['a',473],['info',500],['ab',521],['s',530],['g',535],['fit',552],['a',575],['pedal',597],['a',618],['cubeb',637],['a',661],['ghost',682],['sect',713],['a',735],['rect',756],['a',778],['s',787],['blank',803],['show',836],['ab',858],['s',865],['g',870],['layers',889],['csys',922],['a',942],['s',951],['selb',969],['paint',999],['s',1019],['select',1038],['a',1059],['s',1068],['rod',1085],['a',1108],['ruler',1128],['ab',1150],['s',1158],['g',1164],['ball1',1181],['ball2',1213],['a',1235],['ball3',1256],['a',1277],['grect',1298],['a',1321],['grect2',1341],['a',1364],['box:lamp',1385],['person',1416],['gridg',1447],['trap',1478],['a',1500],['dots',1521],['a',1543],['gbox',1564],['a',1586],['wrench',1606],['ab',1628],['s',1637],['g',1642],['tri',1660],['cal',1690],['fstar',1721],['fcirc',1751],['ab',1774],['s',1783],['g',1788],['vplug',1807],['lplug',1837],['tplug',1868],['more',1912]];
const ROW2: Item[] = [['g',8],['sketch',22],['docp',54],['a',76],['extr',96],['rev',127],['h1',159],['h2',190],['h3',221],['h4',252],['h5',282],['h6',314],['h7',345],['cyl',376],['shell',407],['spring',438],['s',456],['padt',475],['dimp',505],['lnk',538],['teal',569],['a',591],['tcube',611],['dia2',637],['chamf',671],['plate',700],['block',729],['curtain',757],['s',776],['cubeo',791],['curv1',822],['curv2',850],['lcube',880],['more',928],['s',937],['g',942],['pmove',962],['a',982],['ptri',1002],['a',1021],['px',1044],['pcopy',1075],['a',1096],['psplit',1118],['a',1141],['pdim',1164],['a',1184],['poff',1205],['plight',1236],['ab',1257],['s',1267],['g',1272],['surf1',1288],['surf2',1319],['surf3',1349],['redgrid',1381],['gauge',1413],['sflow',1443],['book',1475],['a',1497],['ab',1508],['s',1518],['g',1523],['frame',1539],['stack',1571],['layers',1602],['s',1621],['tag',1639],['s',1658],['vblue',1676],['vham',1706],['vcube',1738],['s',1757],['abc',1773],['ab',1796],['s',1804],['g',1810],['hat1',1827],['hat2',1859],['hand',1890],['ab',1912]];
const ROW3: Item[] = [['sel',77,'没有选择过滤器',142],['sel',232,'整个装配',150],['lnkg',322],['s',338],['filt1',354],['filt2',375],['a',388],['filt3',406],['filt4',429],['s',444],['dash',458],['a',476],['s',485],['wire',499],['shade',522],['s',537],['box:snapa',552],['snapb',575],['box:endp',598],['box:midp',620],['ctrl',642],['tang',666],['box:centerp',689],['quad',712],['box:cross',736],['box:endp',758],['facep',781],['s',796],['gridm',809],['ab',1912]];
const ROWB: Item[] = [['g',5],['sm1',24],['sm2',63],['sm3',96],['sm4',129],['a',150],['sm5',171],['mirror',202],['perp',231],['s',252],['keyc',269],['ycubes',301],['squares',333],['s',352],['hexd',369],['s',388],['chain',406],['cchain',437],['treei',469],['s',487],['twoc',506],['a',522],['ab',534],['s',543],['g',548],['frameStar',567],['flag',597],['tg',636,'完成草图',48],['spline',679],['line',711],['arc',742],['circle',773],['fil1',805],['fil2',834],['rectc',865],['poly',897],['plus',928],['offs',959],['a',981],['s',990],['tr1',1008],['tr2',1038],['tr3',1069],['s',1088],['dim1',1107],['a',1129],['s',1138],['par',1156],['gear',1187],['par2',1223],['a',1241],['s',1249],['exch',1267],['gp1',1297],['gp2',1328],['ab',1351]];

const widthOf = (i: Item) => {
  const k = i[0];
  if (k === 'a' || k === 'ab') return 7;
  if (k === 's') return 2;
  if (k === 'g') return 2;
  if (k === 'more') return 10;
  if (k === 'sel' || k === 't' || k === 'tg') return i[3] as number;
  return 28;
};

/* ---------- styled parts ---------- */
const Page = styled.div`
  height: 100vh; display: flex; flex-direction: column; position: relative; overflow: hidden;
  font-family: ${CJK}; font-size: 12px; color: #222;
`;
const TitleBar = styled.div`
  height: 22px; flex: none; display: flex; align-items: center; padding-left: 4px;
  background: linear-gradient(#a6a6a6 0, #7c7c7c 3px, #2a2a2a 8px, #161616 9px, #131313 100%);
  color: #f2f2f2; font-size: 13px;
`;
const TitleText = styled.span` margin: 0 0 2px 3px; white-space: nowrap; letter-spacing: .25px; `;
const Siemens = styled.span`
  margin-left: auto; margin-right: 28px; font-weight: 700; font-size: 13px; letter-spacing: .6px; color: #fff;
`;
const WinBtn = styled.div<{ $close?: boolean }>`
  width: 20px; height: 19px; margin-right: 1px; border: 1px solid #777; border-radius: 3px;
  display: flex; align-items: center; justify-content: center;
  background: ${p => p.$close ? 'linear-gradient(#f0745a,#d8351c)' : 'linear-gradient(#8a8a8a,#444)'};
`;
const MenuBar = styled.div`
  height: 26px; flex: none; display: flex; align-items: center; background: #e4e4e4; padding-left: 6px;
  border-bottom: 1px solid #d2d2d2;
`;
const MenuItem = styled.div<{ $on?: boolean; $ml?: number }>`
  height: 22px; line-height: 21px; padding: 0 4px; margin-left: ${p => p.$ml ?? 3}px; white-space: nowrap; color: #2a2a2a;
  letter-spacing: -.3px;
  border: 1px solid ${p => p.$on ? '#bdbdbd' : 'transparent'}; border-radius: 2px;
  background: ${p => p.$on ? '#ececec' : 'transparent'};
`;
const MdiBtns = styled.div` margin-left: auto; display: flex; gap: 3px; padding-right: 5px; `;
const MdiBtn = styled.div`
  width: 17px; height: 17px; border: 1px solid #9a9a9a; border-radius: 3px; background: #ededed;
  display: flex; align-items: center; justify-content: center;
`;
const ToolRow = styled.div<{ $h: number; $bg: string }>`
  height: ${p => p.$h}px; flex: none; display: flex; align-items: center; background: ${p => p.$bg};
  border-bottom: 1px solid #c6c6c6; overflow: hidden;
`;
const Placed = styled.div<{ $ml: number; $w: number }>`
  flex: none; margin-left: ${p => p.$ml}px; width: ${p => p.$w}px;
  display: flex; align-items: center; justify-content: center;
`;
const Sep = styled(Placed)`
  align-self: stretch; margin-top: 2px; margin-bottom: 2px; border-left: 1px solid #bcbcbc; border-right: 1px solid #f7f7f7;
`;
const Grip = styled(Placed)`
  align-self: stretch; margin-top: 6px; margin-bottom: 6px;
  background: repeating-linear-gradient(#9a9a9a 0 2px, transparent 2px 4px);
`;
const Caret = styled(Placed)<{ $low?: boolean }>`
  align-self: ${p => p.$low ? 'flex-end' : 'center'}; margin-bottom: ${p => p.$low ? 6 : 0}px;
  &::after { content: ''; border: 3px solid transparent; border-top: 4px solid #111; border-bottom: 0; }
`;
const More = styled(Placed)`
  flex-direction: column; justify-content: space-between; align-self: stretch; padding: 3px 0 7px;
  font-size: 13px; line-height: 12px; font-weight: 700;
`;
const MoreCaret = styled.i` border: 3px solid transparent; border-top: 4px solid #111; border-bottom: 0; `;
const ToolText = styled(Placed)<{ $off?: boolean }>`
  white-space: nowrap; color: ${p => p.$off ? '#8e8e8e' : '#222'};
`;
const Boxed = styled.div`
  width: 28px; height: 28px; display: flex; align-items: center; justify-content: center;
  background: #fbfbfb; border: 1px solid #555; border-radius: 2px;
`;
const Select = styled(Placed)`
  height: 20px; justify-content: space-between; background: #fff; border: 1px solid #555; border-radius: 2px;
  padding-left: 2px; font-size: 13px; color: #111; overflow: hidden;
`;
const SelectBtn = styled.div`
  width: 16px; height: 18px; flex: none; background: linear-gradient(#dfe7f4,#5d7fb8);
  display: flex; align-items: center; justify-content: center; border-left: 1px solid #7a8aa8;
  &::after { content: ''; border: 5px solid transparent; border-top: 6px solid #10224a; border-bottom: 0; }
`;
const StatusRow = styled.div`
  height: 22px; flex: none; display: flex; align-items: center; background: #e2e2e2; border-bottom: 2px solid #9d9d9d;
`;
const StatusCell = styled.div<{ $w?: number }>`
  align-self: stretch; width: ${p => p.$w ? `${p.$w}px` : 'auto'}; flex: ${p => p.$w ? 'none' : 1};
  border-right: 1px solid #c8c8c8;
`;
const StatusIcon = styled.div` width: 19px; height: 20px; flex: none; display: flex; align-items: center; justify-content: center; margin-right: 1px; `;
const Main = styled.div` flex: 1; min-height: 0; display: flex; `;
const Rail = styled.div`
  width: 33px; flex: none; padding: 18px 0 0 7px; display: flex; flex-direction: column; align-items: flex-end;
  background: linear-gradient(90deg,#b4b4b4 0,#acacac 70%,#8a8a8a 100%);
`;
const Tab = styled.div<{ $mt: number; $on?: boolean }>`
  width: ${p => p.$on ? 28 : 26}px; height: 40px; flex: none; margin-top: ${p => p.$mt}px;
  border: 1px solid #8f8f8f; border-right: 0; border-radius: 4px 0 0 4px;
  background: ${p => p.$on ? '#f4f4f4' : '#dcdcdc'};
  display: flex; align-items: center; justify-content: center; overflow: hidden;
`;
const Panel = styled.div`
  width: 243px; flex: none; background: #ececec; border-right: 2px solid #6d6d6d; border-top: 1px solid #fff;
  padding: 0 9px 0 10px; display: flex; flex-direction: column;
`;
const PanelHead = styled.div`
  height: 29px; flex: none; display: flex; align-items: center; padding-left: 4px; gap: 10px;
  font-weight: 700; font-size: 13px; color: #222;
`;
const TreeBox = styled.div`
  height: 718px; flex: none; border: 1px solid #6a6a6a; background: #fff; display: flex; flex-direction: column; position: relative; overflow: hidden;
`;
const TreeHead = styled.div`
  height: 21px; flex: none; display: flex; background: linear-gradient(#f6f6f6,#cfcfcf); border-bottom: 1px solid #bbb;
`;
const HeadName = styled.div`
  flex: 1; padding-left: 6px; display: flex; align-items: center; gap: 10px; font-size: 12px;
  &::after { content: ''; border: 5px solid transparent; border-bottom: 5px solid #222; border-top: 0; }
`;
const HeadCol = styled.div` width: 22px; flex: none; border-left: 1px solid #bbb; padding-left: 5px; line-height: 20px; overflow: hidden; white-space: nowrap; `;
const TreeRows = styled.div` flex: 1; min-height: 0; overflow: hidden; position: relative; `;
const Row = styled.div<{ $alt: boolean }>`
  height: 20px; display: flex; align-items: center; background: ${p => p.$alt ? '#f7f7f7' : '#fff'}; border-bottom: 1px solid #e6e6e6;
`;
const RowMain = styled.div<{ $pl: number; $off?: boolean }>`
  flex: 1; min-width: 0; display: flex; align-items: center; padding-left: ${p => p.$pl}px; white-space: nowrap; overflow: hidden;
  color: ${p => p.$off ? '#a6a6a6' : '#2a2a2a'};
`;
const RowCol = styled.div` width: 22px; flex: none; align-self: stretch; border-left: 1px solid #e3e3e3; `;
const Expander = styled.div<{ $open?: boolean }>`
  width: 9px; height: 9px; flex: none; margin-right: 1px; border: 1px solid #888; background: #fff; position: relative;
  &::before { content: ''; position: absolute; left: 1px; right: 1px; top: 3px; height: 1px; background: #222; }
  ${p => p.$open ? '' : `&::after { content: ''; position: absolute; top: 1px; bottom: 1px; left: 3px; width: 1px; background: #222; }`}
`;
const Check = styled.div`
  width: 12px; height: 12px; flex: none; border: 1px solid #222; background: #fff; margin-right: 1px;
  display: flex; align-items: center; justify-content: center;
`;
const RowIcon = styled.div` width: 17px; height: 17px; flex: none; margin-right: 2px; `;
const TreeLines = styled.svg` position: absolute; left: 0; top: 0; pointer-events: none; `;
const HScroll = styled.div`
  height: 18px; flex: none; display: flex; align-items: center; background: #f1f1f1; padding: 0 6px;
`;
const ScrollArrow = styled.i<{ $left?: boolean }>`
  flex: none; border: 4px solid transparent;
  ${p => p.$left ? 'border-right: 4px solid #444; border-left: 0;' : 'border-left: 4px solid #444; border-right: 0;'}
`;
const Thumb = styled.div`
  width: 135px; height: 15px; margin-left: 8px; background: linear-gradient(#f2f2f2,#c4c4c4); border: 1px solid #999; border-radius: 2px;
  display: flex; align-items: center; justify-content: center; font-size: 8px; color: #555; letter-spacing: 0; line-height: 1;
`;
const ScrollEnd = styled.div` margin-left: auto; display: flex; `;
const Split = styled.div`
  height: 13px; flex: none; display: flex; align-items: center; gap: 3px;
  &::before, &::after { content: ''; height: 1px; background: #c4c4c4; }
  &::before { width: 90px; } &::after { flex: 1; }
`;
const SplitHandle = styled.div` width: 40px; height: 7px; background: linear-gradient(#f4f4f4,#c8c8c8); border: 1px solid #bbb; `;
const Fold = styled.div`
  height: 22px; flex: none; margin-bottom: 1px; display: flex; align-items: center; font-size: 13px; font-weight: 500; padding-left: 6px;
  background: linear-gradient(#f6f6f6,#d0d0d0);
`;
const FoldBtn = styled.div`
  width: 23px; align-self: stretch; margin-left: auto; border-left: 1px solid #fff; display: flex; align-items: center; justify-content: center;
`;
const Canvas = styled.div`
  flex: 1; min-width: 0; background: linear-gradient(#abaeb0 0%, #c4c6c7 28%, #d6d7d8 55%, #e4e5e7 85%, #e7e8ea 100%);
`;
const Drawing = styled.svg` display: block; width: 100%; height: 100%; `;
const BottomBar = styled(ToolRow)`
  border-bottom: 0; border-top: 1px solid #f0f0f0;
`;
const Stamp = styled.svg` position: absolute; left: 0; top: 905px; pointer-events: none; `;

/* ---------- small parts ---------- */
const Svg = ({ k, s = 28 }: { k: string; s?: number }) => (
  <svg width={s} height={s} viewBox="0 0 28 28">{ICONS[k]}</svg>
);

function Tools({ items }: { items: Item[] }) {
  let right = 0;
  return (
    <>
      {items.map((it, i) => {
        const w = widthOf(it);
        const left = Math.round(it[1] - w / 2);
        const ml = left - right;
        right = left + w;
        const k = it[0];
        const p = { $ml: ml, $w: w };
        if (k === 's') return <Sep key={i} {...p} />;
        if (k === 'g') return <Grip key={i} {...p} />;
        if (k === 'a') return <Caret key={i} {...p} />;
        if (k === 'ab') return <Caret key={i} {...p} $low />;
        if (k === 'more') return <More key={i} {...p}><span>»</span><MoreCaret /></More>;
        if (k === 't') return <ToolText key={i} {...p}>{it[2]}</ToolText>;
        if (k === 'tg') return <ToolText key={i} {...p} $off>{it[2]}</ToolText>;
        if (k === 'sel') return <Select key={i} {...p}><span>{it[2]}</span><SelectBtn /></Select>;
        if (k.startsWith('box:')) return <Placed key={i} {...p}><Boxed><Svg k={k.slice(4)} s={24} /></Boxed></Placed>;
        return <Placed key={i} {...p}><Svg k={k} /></Placed>;
      })}
    </>
  );
}

const LEFT_EDGE = 'C960 585 1030 490 1067 407 C1095 345 1115 270 1127 209';
const RIGHT_EDGE = 'C1443 400 1420 510 1377 587 C1330 670 1220 721 1109 721 C1030 721 950 700 901 645';
const HOLE = 'M1227 366 C1255 366 1277 410 1277 453 C1277 545 1210 629 1128 629 C1080 629 1049 610 1049 573 C1049 530 1150 366 1227 366 Z';

const Model = () => (
  <Drawing viewBox="276 170 1644 836" preserveAspectRatio="none">
    <defs>
      <linearGradient id="cyl" gradientUnits="userSpaceOnUse" x1="871" y1="0" x2="1386" y2="0">
        <stop offset="0" stopColor="#c67d00" /><stop offset=".15" stopColor="#c47c00" /><stop offset=".36" stopColor="#e08800" /><stop offset=".6" stopColor="#e68b00" /><stop offset=".88" stopColor="#e08700" /><stop offset="1" stopColor="#cd8000" />
      </linearGradient>
      <linearGradient id="face" gradientUnits="userSpaceOnUse" x1="1300" y1="220" x2="1170" y2="560">
        <stop offset="0" stopColor="#ff9d10" /><stop offset=".3" stopColor="#ffae14" /><stop offset=".65" stopColor="#fec81e" /><stop offset="1" stopColor="#ffc000" />
      </linearGradient>
      <linearGradient id="hole" gradientUnits="userSpaceOnUse" x1="1050" y1="0" x2="1277" y2="0">
        <stop offset="0" stopColor="#cc8100" /><stop offset=".2" stopColor="#e08800" /><stop offset=".55" stopColor="#e78c00" /><stop offset=".84" stopColor="#bf7700" /><stop offset="1" stopColor="#d08300" />
      </linearGradient>
    </defs>
    <path d="M933 232 A258 49 5.6 0 1 1445 282 L1386 877 A259 50 6 0 1 871 822 Z" fill="url(#cyl)" />
    <path d="M1386 877 A259 50 6 0 1 871 822" fill="none" stroke="#3a2800" strokeWidth=".7" />
    <path d="M933 232 A258 49 5.6 0 1 1445 282 L1127 209 L940 248 Q934 240 933 232 Z" fill="#ffb400" stroke="#3a2800" strokeWidth=".6" />
    <path d={`M940 248 L1127 209 L1127 209 M901 645 ${LEFT_EDGE} L940 248 Z`} fill="#dd8500" stroke="#3a2800" strokeWidth=".6" />
    <path d={`M1127 209 L1445 282 ${RIGHT_EDGE} ${LEFT_EDGE} Z`} fill="url(#face)" stroke="#3a2800" strokeWidth=".7" />
    <path d={HOLE} fill="url(#hole)" stroke="#3a2800" strokeWidth=".7" />
    <g fill="none" stroke="#f3dcc0" strokeWidth="1.1">
      <path d="M1033 826 L1129 847 L1195 834 M1141 730 L1129 847 M1073 834 L1079 769 L1136 782 L1172 775 L1165 840 M1073 834 L1109 827 L1165 840" />
    </g>
    <polygon points="1142,716 1146,734 1138,734" fill="#b8b8b8" />
    <polygon points="1018,823 1034,822 1032,829" fill="#b8c0c8" />
    <polygon points="1202,833 1190,829 1192,838" fill="#b8b8b8" />
    <g fontFamily="Liberation Sans, sans-serif" fontSize="13" fill="#f4e6d2">
      <text x="1008" y="827">Y</text><text x="1200" y="838">X</text><text x="1137" y="716" fill="#f6d060">Z</text>
    </g>
    <g>
      <polygon points="322,917 327,905 341,903 359,909 354,924 343,935 325,928" fill="#d4d6d8" stroke="#b4b6b8" />
      <path d="M327 905 L340 912 L359 909 M340 912 L336 933" fill="none" stroke="#b4b6b8" />
      <path d="M343 934 L346 900" stroke="#1a3cc8" strokeWidth="2.4" />
      <polygon points="346,895 350,906 342,905" fill="#1a3cc8" />
      <path d="M343 934 L362 930" stroke="#c05060" strokeWidth="1.6" /><polygon points="367,928 358,927 360,933" fill="#c05060" />
      <path d="M343 934 L312 929" stroke="#3c9a4a" strokeWidth="2" /><polygon points="305,928 315,925 314,932" fill="#3c9a4a" />
      <circle cx="343" cy="935" r="3" fill="#ccc" />
      <g fontFamily="Liberation Sans, sans-serif" fontSize="13">
        <text x="342" y="894" fill="#2a46c8">Z</text><text x="367" y="938" fill="#c04050">X</text><text x="297" y="934" fill="#3c9a4a">Y</text>
      </g>
    </g>
  </Drawing>
);

const MINI: Record<string, React.ReactNode> = {
  clock: <g><circle cx="14" cy="14" r="12" fill="#dfe6f2" stroke="#555" strokeWidth="1.6" /><circle cx="14" cy="14" r="9" fill="#fff" /><path d="M14 7 V15 H20" stroke="#223" strokeWidth="2" fill="none" /></g>,
  view: <g fill="#bfe8d0" stroke="#1f8a68" strokeWidth="1.6"><polygon points="14,3 25,8 25,20 14,25 3,20 3,8" /><path d="M3 8 L14 14 L25 8 M14 14 V25 M8 5 L19 11 M20 5 L8 11" fill="none" /><path d="M8 26 L22 22" stroke="#d8322a" /></g>,
  cam: <g><polygon points="3,8 15,4 18,20 5,25" fill="#f4d4d8" stroke="#c84a5a" /><rect x="10" y="6" width="14" height="14" rx="3" fill="#a9b4e8" stroke="#6a4ab8" /><circle cx="17" cy="13" r="4" fill="#dfe6fb" stroke="#5566aa" /></g>,
  folder: <g><path d="M2 8 L10 8 L12 11 L24 11 L24 25 L2 25 Z" fill="#a8863c" /><path d="M2 25 L7 14 L27 14 L24 25 Z" fill="#f7cf5a" stroke="#a8863c" /></g>,
  csys: <g fill="none" stroke="#555" strokeWidth="1.6"><path d="M6 3 L9 18 L26 8 M9 18 L22 26 M4 14 L20 22" /><path d="M9 18 L24 25" stroke="#d8322a" /></g>,
  ext: <g><path d="M3 6 C8 3 14 7 25 4 V22 C16 25 8 21 3 24 Z" fill="#f29a25" stroke="#8a5a12" /><path d="M9 5 V23 M14 6 V23 M19 5 V23" stroke="#8a5a12" /><path d="M3 24 C8 21 16 25 25 22" stroke="#3a4ac8" strokeWidth="2.4" fill="none" /></g>,
  sk: <g fill="#fff" stroke="#333" strokeWidth="1.5"><rect x="2" y="2" width="12" height="12" /><rect x="2" y="16" width="10" height="10" /><rect x="14" y="16" width="12" height="10" /><path d="M14 15 L25 3 L27 5 L16 17 Z" fill="#e8a23a" stroke="#a86a1a" /></g>,
};
const Mini = ({ k }: { k: string }) => <RowIcon><svg width="17" height="17" viewBox="0 0 28 28">{MINI[k]}</svg></RowIcon>;
const Tick = () => <svg width="10" height="10" viewBox="0 0 14 12"><polyline points="1,6 5,11 13,1" fill="none" stroke="#18a02c" strokeWidth="3" /></svg>;

const MENUS = ['编辑(E)','视图(V)','插入(S)','格式(R)','工具(T)','装配(A)','信息(I)','分析(L)','首选项(P)','窗口(O)','GC 工具箱','帮助(H)'];

const TABS: { mt: number; on?: boolean; k: React.ReactNode }[] = [
  { mt: 0, k: ICONS.ycubes },
  { mt: 2, k: ICONS.mirror },
  { mt: 2, on: true, k: <g><ellipse cx="9" cy="5" rx="6" ry="2.6" fill="#d6a0e0" stroke="#7a3a90" /><rect x="3" y="5" width="12" height="8" fill="#d6a0e0" stroke="#7a3a90" /><path d="M10 15 V23 H15 M17 11 H26" stroke="#333" fill="none" /><circle cx="21" cy="22" r="4" fill="none" stroke="#b84a6a" /><circle cx="21" cy="22" r="1.4" fill="#b84a6a" /></g> },
  { mt: 2, k: <g><path d="M2 10 L8 4 V26 H2 Z" fill="#f39a25" /><path d="M9 10 L15 4 V26 H9 Z" fill="#3fa94a" /><path d="M16 10 L22 4 V26 H16 Z" fill="#2a74d8" /></g> },
  { mt: 13, k: <g><circle cx="10" cy="19" r="8" fill="#2a7ad8" /><rect x="8.6" y="17" width="3" height="7" fill="#fff" /><rect x="8.6" y="13" width="3" height="2.6" fill="#fff" /><path d="M8 6 C16 6 22 12 22 20 M8 1 C19 1 27 9 27 20" stroke="#2a7ad8" strokeWidth="2.4" fill="none" /></g> },
  { mt: 14, k: <g><path d="M5 2 H17 L24 9 V26 H5 Z" fill="#fdfdff" stroke="#5a70b8" /><circle cx="14" cy="17" r="6" fill="#3fa06a" /><circle cx="12" cy="15" r="2.4" fill="#3a7ad8" /></g> },
  { mt: 14, k: <g><circle cx="14" cy="14" r="12" fill="#dfe6f2" stroke="#888" strokeWidth="1.4" /><circle cx="14" cy="14" r="9.5" fill="#fff" /><path d="M14 6 V15 H20" stroke="#223" strokeWidth="1.8" fill="none" /></g> },
  { mt: 2, k: <g><polygon points="2,6 9,3 9,24 2,26" fill="#fff" stroke="#888" /><rect x="9" y="4" width="17" height="19" fill="#fff" stroke="#888" /><circle cx="13" cy="9" r="2" fill="#2a6ad8" /><circle cx="13" cy="14" r="2" fill="#3fa94a" /><circle cx="13" cy="19" r="2" fill="#c83a2a" /><path d="M17 9 H24 M17 14 H24 M17 19 H24" stroke="#555" /></g> },
  { mt: 2, k: <g><defs><linearGradient id="rb" x1="0" y1="0" x2="0" y2="1"><stop offset="0" stopColor="#e83a2a" /><stop offset=".3" stopColor="#f7d22a" /><stop offset=".6" stopColor="#2ad84a" /><stop offset="1" stopColor="#1a3ad8" /></linearGradient></defs><rect x="3" y="3" width="9" height="23" fill="url(#rb)" /><path d="M13 9 L25 24" stroke="#111" strokeWidth="2.6" /></g> },
  { mt: 2, k: <g><path d="M4 24 L10 5 L12 24 M3 16 H14 M3 20 H14" stroke="#3a6ac8" strokeWidth="2" fill="none" /><path d="M12 6 H26 L18 16" stroke="#3a6ac8" fill="none" strokeWidth="1.4" /><path d="M14 9 L24 25" stroke="#111" strokeWidth="2.6" /></g> },
  { mt: 2, k: <g><circle cx="19" cy="10" r="6" fill="#c8963a" /><path d="M11 24 C11 16 27 16 27 24 Z" fill="#2f8a3a" /><circle cx="9" cy="15" r="5.5" fill="#8a6a4a" /><path d="M1 26 C1 19 17 19 17 26 Z" fill="#8a5ab8" /></g> },
  { mt: 2, k: <g><polygon points="2,6 9,3 9,24 2,26" fill="#fff" stroke="#888" /><rect x="9" y="4" width="17" height="19" fill="#fff" stroke="#888" /><path d="M11 6 H24 V10 L20 12 L22 21 H13 L15 12 L11 10 Z" fill="#c8222a" /><rect x="15" y="12" width="5" height="8" fill="#3a6ac8" /></g> },
];

const ROWS: { pl: number; exp?: 'o' | 'c'; tick?: boolean; chk?: boolean; k?: string; t?: string; off?: boolean }[] = [
  { pl: 18, k: 'clock', t: '历史记录模式' },
  { pl: 6, exp: 'c', k: 'view', t: '模型视图' },
  { pl: 6, exp: 'c', tick: true, k: 'cam', t: '摄像机' },
  { pl: 18, k: 'folder', t: '用户表达式' },
  { pl: 6, exp: 'o', k: 'folder', t: '模型历史记录' },
  { pl: 40, chk: true, k: 'csys', t: '基准坐标系 (0)' },
  { pl: 40, chk: true, k: 'ext', t: '拉伸 (1)' },
  { pl: 40, chk: true, k: 'sk', t: '草图 (2) "SKETCH_0...', off: true },
  { pl: 40, chk: true, k: 'ext', t: '拉伸 (3)' },
];

const Chevron = () => (
  <svg width="14" height="10" viewBox="0 0 14 10"><path d="M2 1 L7 8 L12 1" fill="none" stroke="#555" strokeWidth="3" /></svg>
);

export default function App() {
  return (
    <Page>
      <Global />
      <TitleBar>
        <svg width="18" height="18" viewBox="0 0 18 18"><path d="M1 3 C6 3 9 8 8 16 C5 13 2 9 1 3 Z" fill="#d8322a" /><path d="M17 2 C13 8 10 12 5 15 C9 16 15 11 17 2 Z" fill="#3a8ad8" /><path d="M6 4 C9 5 12 5 14 3 C12 7 10 9 8 11 Z" fill="#f2d22a" /></svg>
        <TitleText>NX 8.5 - 建模 - [2014.8.5-5.prt（修改的）]</TitleText>
        <Siemens>SIEMENS</Siemens>
        <WinBtn><svg width="10" height="10"><rect x="1" y="7" width="7" height="2" fill="#fff" /></svg></WinBtn>
        <WinBtn><svg width="12" height="12" fill="none" stroke="#fff" strokeWidth="1.3"><rect x="1.5" y="4.5" width="6" height="6" /><path d="M4 4 V1.5 H10.5 V8 H8" /></svg></WinBtn>
        <WinBtn $close><svg width="12" height="12" stroke="#fff" strokeWidth="2.4"><path d="M2 2 L10 10 M10 2 L2 10" /></svg></WinBtn>
      </TitleBar>
      <MenuBar>
        <svg width="15" height="20" viewBox="0 0 15 20"><path d="M0 3 V17" stroke="#999" strokeDasharray="2 2" strokeWidth="2" /><path d="M7 4 L13 2 L14 14 L8 18 L5 13 L9 11 L6 9 Z" fill="#2a7ad8" stroke="#15408a" strokeWidth=".6" /></svg>
        <MenuItem $on $ml={3}>文件(F)</MenuItem>
        {MENUS.map((m, i) => <MenuItem key={m} $ml={i === 0 ? 1 : i === 10 ? 4 : 3}>{m}</MenuItem>)}
        <MdiBtns>
          <MdiBtn><svg width="9" height="9"><rect x="1" y="6" width="6" height="2" fill="#555" /></svg></MdiBtn>
          <MdiBtn><svg width="11" height="11" fill="none" stroke="#555"><rect x="1.5" y="3.5" width="6" height="6" /><path d="M4 3 V1.5 H9.5 V7 H8" /></svg></MdiBtn>
          <MdiBtn><svg width="10" height="10" stroke="#333" strokeWidth="2"><path d="M1 1 L9 9 M9 1 L1 9" /></svg></MdiBtn>
        </MdiBtns>
      </MenuBar>
      <ToolRow $h={35} $bg="linear-gradient(#e6e6e6,#dcdcdc)"><Tools items={ROW1} /></ToolRow>
      <ToolRow $h={34} $bg="linear-gradient(#e4e4e4,#d0d0d0)"><Tools items={ROW2} /></ToolRow>
      <ToolRow $h={31} $bg="#dfdfdf"><Tools items={ROW3} /></ToolRow>
      <StatusRow>
        <StatusCell $w={910} />
        <StatusCell $w={912} />
        <StatusCell $w={20} />
        <StatusCell />
        <StatusIcon><svg width="18" height="18" viewBox="0 0 28 28">{ICONS.vq}</svg></StatusIcon>
        <StatusIcon><svg width="18" height="18" viewBox="0 0 28 28">{ICONS.vfit}</svg></StatusIcon>
      </StatusRow>
      <Main>
        <Rail>
          {TABS.map((t, i) => (
            <Tab key={i} $mt={t.mt} $on={t.on}><svg width="26" height="26" viewBox="0 0 28 28">{t.k}</svg></Tab>
          ))}
        </Rail>
        <Panel>
          <PanelHead>
            <svg width="14" height="14" viewBox="0 0 14 14"><path d="M2 9 L5 2 L12 1 L12 6 L7 11 L3 13 Z" fill="#fff" stroke="#111" strokeWidth="1.4" /><circle cx="7" cy="7" r="2" fill="#3a8a3a" /></svg>
            部件导航器
          </PanelHead>
          <TreeBox>
            <TreeHead>
              <HeadName>名称</HeadName>
              <HeadCol>附注</HeadCol>
            </TreeHead>
            <TreeRows>
              {Array.from({ length: 34 }).map((_, i) => {
                const r = ROWS[i];
                return (
                  <Row key={i} $alt={i % 2 === 1}>
                    {r ? (
                      <RowMain $pl={r.pl} $off={r.off}>
                        {r.exp && <Expander $open={r.exp === 'o'} />}
                        {r.exp && <>&nbsp;</>}
                        {r.tick && <><Tick />&nbsp;</>}
                        {r.chk && <Check><Tick /></Check>}
                        {r.k && <Mini k={r.k} />}
                        <span>{r.t}</span>
                      </RowMain>
                    ) : <RowMain $pl={0} />}
                    <RowCol />
                  </Row>
                );
              })}
              <TreeLines width="80" height="190">
                <g fill="none" stroke="#999" strokeDasharray="1 1">
                  <path d="M9.5 10 V90 M10 10 H17 M10 70 H17 M24 90 V170 M24 110 H39 M24 130 H39 M24 150 H39 M24 170 H39" />
                </g>
              </TreeLines>
            </TreeRows>
            <HScroll>
              <ScrollArrow $left />
              <Thumb>|||</Thumb>
              <ScrollEnd><ScrollArrow /></ScrollEnd>
            </HScroll>
          </TreeBox>
          <Split><SplitHandle /></Split>
          <Fold>相关性<FoldBtn><Chevron /></FoldBtn></Fold>
          <Fold>细节<FoldBtn><Chevron /></FoldBtn></Fold>
          <Fold>预览<FoldBtn><Chevron /></FoldBtn></Fold>
        </Panel>
        <Canvas><Model /></Canvas>
      </Main>
      <BottomBar $h={34} $bg="linear-gradient(#e2e2e2,#c2c2c2)"><Tools items={ROWB} /></BottomBar>
      <Stamp width="135" height="135" viewBox="0 905 135 135">
        <g fill="none" stroke="#f20e0e">
          <path d="M20 995 C5 965 15 930 45 918 C72 908 106 918 119 948" strokeWidth="4" strokeDasharray="60 2 30 3 22 4 14 5 8 3" />
          <path d="M112 930 C120 945 124 955 122 965" strokeWidth="2" strokeDasharray="5 3" />
          <path d="M14 985 C14 1000 22 1012 32 1020 C55 1036 88 1034 112 1012" strokeWidth="7" strokeDasharray="50 2 26 3 20 2" />
        </g>
        <circle cx="69" cy="935" r="6" fill="#f20e0e" />
        <path d="M47 938 L84 973 M96 938 L55 962" stroke="#f20e0e" strokeWidth="8" />
        <rect x="28" y="993" width="94" height="13" fill="#e81010" />
        <text x="33" y="990" fontFamily="Liberation Sans, Noto Sans CJK SC, sans-serif" fontSize="18" fontWeight="700" fill="#f20e0e">UG爱好者</text>
        <text x="30" y="1003" fontFamily="Liberation Sans, sans-serif" fontSize="10" fontWeight="700" fill="#fff">WWW.UGSNX.COM</text>
      </Stamp>
    </Page>
  );
}
